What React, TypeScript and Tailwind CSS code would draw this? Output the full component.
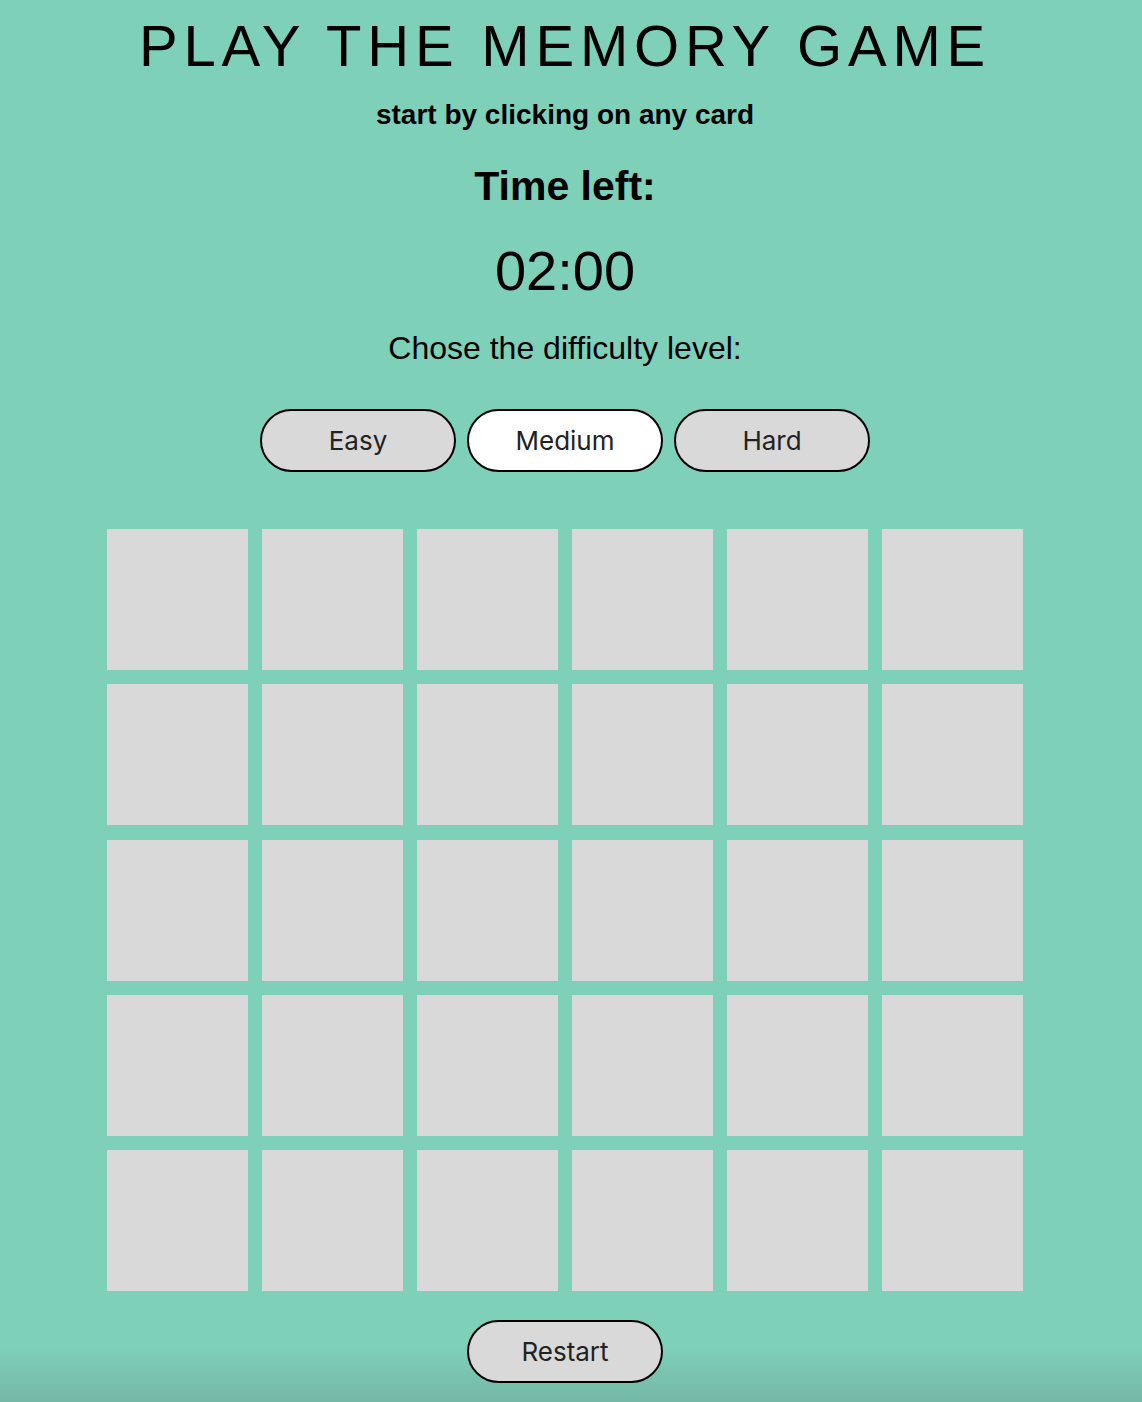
import { useState } from "react";

type Level = "Easy" | "Medium" | "Hard";

const levels: Level[] = ["Easy", "Medium", "Hard"];

export default function App() {
    const [level, setLevel] = useState<Level>("Medium");
    const cards = Array.from({ length: 30 }, (_, i) => i);

    return (
        <div className="min-h-[1402px] w-full bg-[linear-gradient(to_bottom,#7fd0b9_0%,#7fd0b9_96%,#74b8a5_100%)] font-['Liberation_Sans',Arial,sans-serif] text-black">
            <div className="mx-auto flex w-full max-w-[1130px] flex-col items-center mr-[12px]">
                {/* Header */}
                <h1 className="mt-[17px] text-[58px] font-normal leading-none tracking-[5.8px]">PLAY THE MEMORY GAME</h1>
                <p className="mt-[26px] text-[28px] font-bold leading-none">start by clicking on any card</p>
                <h2 className="mt-[37px] text-[41px] font-bold leading-none">Time left:</h2>
                <div className="mt-[36px] text-[56px] leading-none">02:00</div>
                <p className="mt-[33px] text-[32px] leading-none">Chose the difficulty level:</p>

                {/* Difficulty */}
                <div className="mt-[45px] flex gap-[11px]">
                    {levels.map((l) => (
                        <button
                            key={l}
                            onClick={() => setLevel(l)}
                            className={
                                l === level
                                    ? "h-[63px] w-[196px] rounded-full border-2 border-black bg-white font-['Inter',sans-serif] text-[26px] text-[#222]"
                                    : "h-[63px] w-[196px] rounded-full border-2 border-black bg-[#d9d9d9] font-['Inter',sans-serif] text-[26px] text-[#222]"
                            }
                        >
                            {l}
                        </button>
                    ))}
                </div>

                {/* Cards */}
                <div className="mt-[57px] grid grid-cols-[repeat(6,141px)] gap-x-[14px] gap-y-[14.25px]">
                    {cards.map((c) => (
                        <div key={c} className="h-[141px] w-[141px] bg-[#d9d9d9]" />
                    ))}
                </div>

                <button className="mt-[29px] h-[63px] w-[196px] rounded-full border-2 border-black bg-[#d9d9d9] font-['Inter',sans-serif] text-[26px] text-[#222]">
                    Restart
                </button>
            </div>
        </div>
    );
}
